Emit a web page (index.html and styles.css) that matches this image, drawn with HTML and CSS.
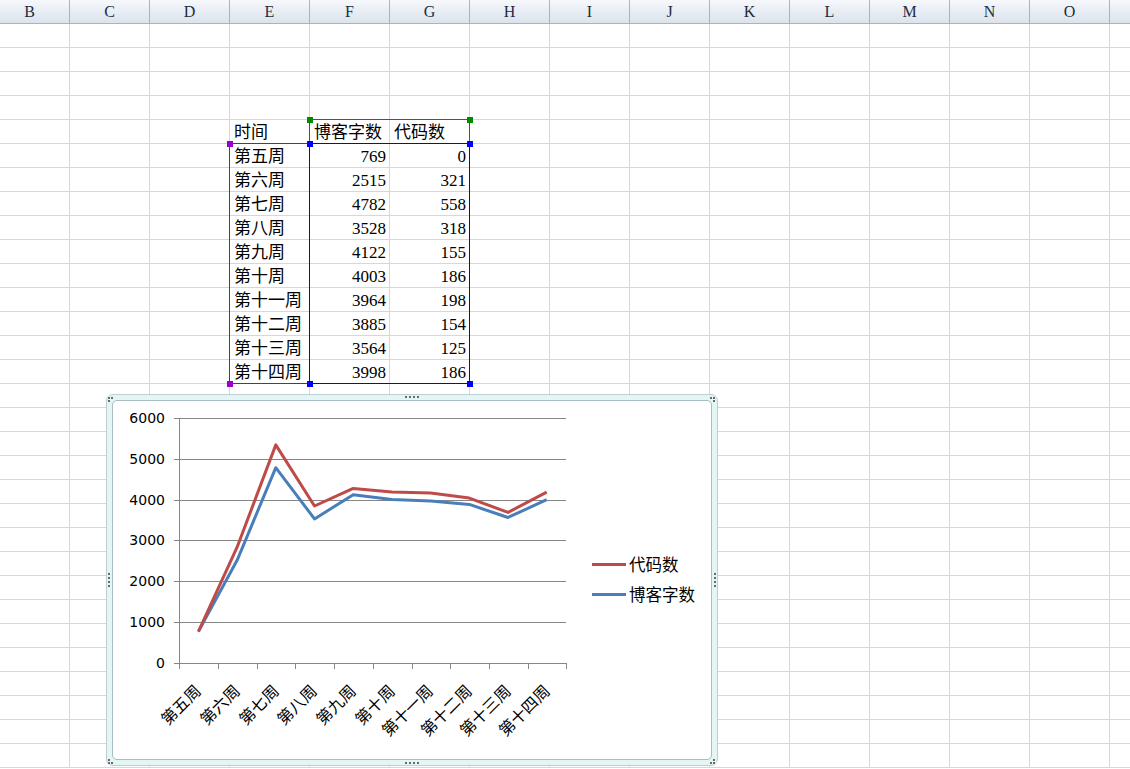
FILE: index.html
```html
<!DOCTYPE html>
<html lang="zh-CN">
<head>
<meta charset="utf-8">
<title>Sheet</title>
<link rel="stylesheet" href="styles.css">
</head>
<body>
<div class="app">
  <div class="colheads">
    <div class="ch">B</div><div class="ch">C</div><div class="ch">D</div><div class="ch">E</div>
    <div class="ch">F</div><div class="ch">G</div><div class="ch">H</div><div class="ch">I</div>
    <div class="ch">J</div><div class="ch">K</div><div class="ch">L</div><div class="ch">M</div>
    <div class="ch">N</div><div class="ch">O</div><div class="ch"></div>
  </div>
  <div class="sheet">
    <div class="table">
      <div class="cell">时间</div><div class="cell">博客字数</div><div class="cell">代码数</div>
      <div class="cell">第五周</div><div class="cell num">769</div><div class="cell num">0</div>
      <div class="cell">第六周</div><div class="cell num">2515</div><div class="cell num">321</div>
      <div class="cell">第七周</div><div class="cell num">4782</div><div class="cell num">558</div>
      <div class="cell">第八周</div><div class="cell num">3528</div><div class="cell num">318</div>
      <div class="cell">第九周</div><div class="cell num">4122</div><div class="cell num">155</div>
      <div class="cell">第十周</div><div class="cell num">4003</div><div class="cell num">186</div>
      <div class="cell">第十一周</div><div class="cell num">3964</div><div class="cell num">198</div>
      <div class="cell">第十二周</div><div class="cell num">3885</div><div class="cell num">154</div>
      <div class="cell">第十三周</div><div class="cell num">3564</div><div class="cell num">125</div>
      <div class="cell">第十四周</div><div class="cell num">3998</div><div class="cell num">186</div>
    </div>
    <div class="sel sel-e"><i class="h tl"></i><i class="h tr"></i><i class="h bl"></i><i class="h br"></i></div>
    <div class="sel sel-h"><i class="h tl"></i><i class="h tr"></i><i class="h bl"></i><i class="h br"></i></div>
    <div class="sel sel-d"><i class="h tl"></i><i class="h tr"></i><i class="h bl"></i><i class="h br"></i></div>
  </div>

  <div class="chart">
    <div class="panel"></div>
    <svg class="chart-svg" width="612" height="372" viewBox="106 394 612 372" xmlns="http://www.w3.org/2000/svg">
      <g class="dots" fill="#6b6b6b">
        <rect x="405" y="396" width="2" height="2"/><rect x="409" y="396" width="2" height="2"/><rect x="413" y="396" width="2" height="2"/><rect x="417" y="396" width="2" height="2"/>
        <rect x="405" y="762" width="2" height="2"/><rect x="409" y="762" width="2" height="2"/><rect x="413" y="762" width="2" height="2"/><rect x="417" y="762" width="2" height="2"/>
        <rect x="108" y="573" width="2" height="2"/><rect x="108" y="577" width="2" height="2"/><rect x="108" y="581" width="2" height="2"/><rect x="108" y="585" width="2" height="2"/>
        <rect x="714" y="573" width="2" height="2"/><rect x="714" y="577" width="2" height="2"/><rect x="714" y="581" width="2" height="2"/><rect x="714" y="585" width="2" height="2"/>
        <rect x="108" y="397" width="2" height="2"/><rect x="111" y="397" width="2" height="2"/><rect x="108" y="400" width="2" height="2"/>
        <rect x="710" y="397" width="2" height="2"/><rect x="713" y="397" width="2" height="2"/><rect x="713" y="400" width="2" height="2"/>
        <rect x="108" y="762" width="2" height="2"/><rect x="111" y="762" width="2" height="2"/><rect x="108" y="759" width="2" height="2"/>
        <rect x="710" y="762" width="2" height="2"/><rect x="713" y="762" width="2" height="2"/><rect x="713" y="759" width="2" height="2"/>
      </g>
      <g stroke="#868686" stroke-width="1" fill="none" shape-rendering="crispEdges">
        <path d="M179 418.5H566M179 459.5H566M179 500.5H566M179 540.5H566M179 581.5H566M179 622.5H566"/>
        <path d="M179.5 418V663M174 418.5H179M174 459.5H179M174 500.5H179M174 540.5H179M174 581.5H179M174 622.5H179M174 663.5H179"/>
        <path d="M179 663.5H567M179.5 663V669M218.5 663V669M257.5 663V669M295.5 663V669M334.5 663V669M373.5 663V669M412.5 663V669M450.5 663V669M489.5 663V669M528.5 663V669M566.5 663V669"/>
      </g>
      <g class="ylab" text-anchor="end">
        <text x="165" y="423">6000</text>
        <text x="165" y="464">5000</text>
        <text x="165" y="505">4000</text>
        <text x="165" y="545">3000</text>
        <text x="165" y="586">2000</text>
        <text x="165" y="627">1000</text>
        <text x="165" y="668">0</text>
      </g>
      <g class="xlab" text-anchor="end">
        <text transform="translate(202 692) rotate(-45)">第五周</text>
        <text transform="translate(241 692) rotate(-45)">第六周</text>
        <text transform="translate(280 692) rotate(-45)">第七周</text>
        <text transform="translate(318 692) rotate(-45)">第八周</text>
        <text transform="translate(357 692) rotate(-45)">第九周</text>
        <text transform="translate(396 692) rotate(-45)">第十周</text>
        <text transform="translate(434 692) rotate(-45)">第十一周</text>
        <text transform="translate(473 692) rotate(-45)">第十二周</text>
        <text transform="translate(512 692) rotate(-45)">第十三周</text>
        <text transform="translate(551 692) rotate(-45)">第十四周</text>
      </g>
      <polyline fill="none" stroke="#4a7ebb" stroke-width="3" stroke-linejoin="round" points="198.4,631.6 237.1,560.3 275.8,467.7 314.5,518.9 353.2,494.7 391.9,499.5 430.6,501.1 469.3,504.4 508,517.5 546.7,499.7"/>
      <polyline fill="none" stroke="#be4b48" stroke-width="3" stroke-linejoin="round" points="198.4,631.6 237.1,547.2 275.8,444.9 314.5,506 353.2,488.4 391.9,491.9 430.6,493 469.3,498.1 508,512.4 546.7,492.2"/>
      <line x1="592" y1="564.5" x2="626" y2="564.5" stroke="#be4b48" stroke-width="3"/>
      <line x1="592" y1="594.5" x2="626" y2="594.5" stroke="#4a7ebb" stroke-width="3"/>
      <g class="legend">
        <text x="629" y="571">代码数</text>
        <text x="629" y="601">博客字数</text>
      </g>
    </svg>
  </div>
</div>
</body>
</html>
```

FILE: styles.css
```css
html, body {
  margin: 0;
  padding: 0;
  background: #ffffff;
}

body {
  width: 1130px;
  height: 769px;
  overflow: hidden;
  font-family: "Liberation Serif", "Noto Sans CJK SC", serif;
}

.app {
  position: relative;
  width: 1130px;
  height: 769px;
  overflow: hidden;
}

.colheads {
  display: flex;
  margin-left: -10px;
  height: 24px;
}

.ch {
  flex: 0 0 80px;
  box-sizing: border-box;
  height: 24px;
  border-right: 1px solid #9eb6ce;
  border-bottom: 1px solid #9eb6ce;
  background: linear-gradient(to bottom, #f6f8fb 0%, #e8edf4 50%, #dce3ec 100%);
  text-align: center;
  font-family: "Liberation Serif", serif;
  font-size: 16px;
  line-height: 24px;
  color: #1b2c44;
}

.sheet {
  display: grid;
  grid-template-columns: repeat(15, 80px);
  grid-template-rows: repeat(31, 24px);
  margin-left: -10px;
  background-image:
    linear-gradient(to right, transparent 79px, #d0d7e5 79px),
    linear-gradient(to bottom, transparent 23px, #d0d7e5 23px);
  background-size: 80px 24px, 80px 24px;
}

.table {
  grid-column: 4 / 7;
  grid-row: 5 / 16;
  display: grid;
  grid-template-columns: repeat(3, 80px);
  grid-auto-rows: 24px;
}

.cell {
  padding: 1px 4px 0 4px;
  font-size: 17px;
  line-height: 24px;
  white-space: nowrap;
  color: #000;
}

.num {
  text-align: right;
}

.sel {
  position: relative;
  margin: -1px 0 0 -1px;
  border: 1px solid currentColor;
  box-sizing: border-box;
}

.sel-e {
  grid-column: 4;
  grid-row: 6 / 16;
  color: #9a00cc;
}

.sel-h {
  grid-column: 5 / 7;
  grid-row: 5;
  color: #008a00;
}

.sel-d {
  grid-column: 5 / 7;
  grid-row: 6 / 16;
  color: #0000ff;
}

.h {
  position: absolute;
  width: 6px;
  height: 6px;
  background: currentColor;
}

.h.tl { left: -3px; top: -3px; }
.h.tr { right: -4px; top: -3px; }
.h.bl { left: -3px; bottom: -4px; }
.h.br { right: -4px; bottom: -4px; }

.chart {
  position: absolute;
  left: 106px;
  top: 394px;
  width: 612px;
  height: 372px;
  box-sizing: border-box;
  border: 1px solid #bcd0d3;
  border-radius: 7px;
  background: #e4f5f5;
  padding: 5px;
}

.panel {
  height: 100%;
  box-sizing: border-box;
  border: 1px solid #a9bec1;
  border-radius: 5px;
  background: #ffffff;
}

.chart-svg {
  position: absolute;
  left: -1px;
  top: -1px;
}

.ylab text {
  font-family: "DejaVu Sans", sans-serif;
  font-size: 14px;
  fill: #000;
}

.xlab text {
  font-family: "Noto Sans CJK SC", sans-serif;
  font-size: 16px;
  fill: #000;
}

.legend text {
  font-family: "Noto Sans CJK SC", sans-serif;
  font-size: 16.5px;
  fill: #000;
}
```
